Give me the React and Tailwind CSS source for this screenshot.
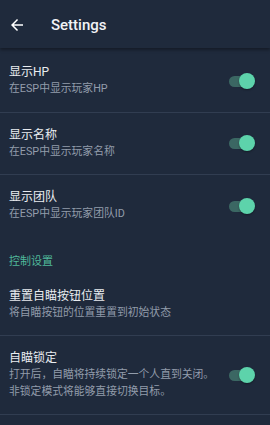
import React from 'react';

const FONT = { fontFamily: 'Roboto, "Noto Sans CJK SC", sans-serif' };

const Toggle = () => (
    <div className="relative w-[26px] h-[16px] shrink-0">
        <div className="absolute left-0 top-[3px] w-[24px] h-[11px] rounded-full bg-[#3b6763]" />
        <div className="absolute right-0 top-0 w-[16px] h-[16px] rounded-full bg-[#5dd3ab] shadow-[0_1px_2px_rgba(0,0,0,0.35)]" />
    </div>
);

const Item = ({ title, lines, toggle, divider = true }) => (
    <>
        <div className="flex items-center justify-between pl-[9px] pr-[15px] py-[14px]">
            <div className="flex flex-col">
                <div className="text-[12px] leading-[17px] text-[#e9ecf0]">{title}</div>
                {lines.map((l) => (
                    <div key={l} className="text-[10.8px] leading-[16.5px] text-[#929cab]">{l}</div>
                ))}
            </div>
            {toggle && <Toggle />}
        </div>
        {divider && <div className="h-px bg-[#313d51]" />}
    </>
);

export default function App() {
    return (
        <div className="w-[270px] h-[425px] overflow-hidden bg-[#1f2a3c]" style={FONT}>
            <div className="relative z-10 h-[48px] flex items-center bg-[#1f2a3c] shadow-[0_2px_3px_rgba(0,0,0,0.35)]">
                <svg width="18" height="18" viewBox="0 0 24 24" className="ml-[8px] mt-[2px]" fill="#ffffff">
                    <path d="M20 11H7.83l5.59-5.59L12 4l-8 8 8 8 1.41-1.41L7.83 13H20v-2z" />
                </svg>
                <span className="ml-[25px] mt-[2px] text-[15px] font-medium text-[#f1f3f6]">Settings</span>
            </div>

            <div className="pt-[2px]">
                <Item title="显示HP" lines={['在ESP中显示玩家HP']} toggle />
                <Item title="显示名称" lines={['在ESP中显示玩家名称']} toggle />
                <Item title="显示团队" lines={['在ESP中显示玩家团队ID']} toggle divider={false} />

                <div className="pl-[9px] pt-[17px] pb-[4px] text-[11px] leading-[16px] text-[#4fb89a]">控制设置</div>

                <Item title="重置自瞄按钮位置" lines={['将自瞄按钮的位置重置到初始状态']} />
                <Item
                    title="自瞄锁定"
                    lines={['打开后，自瞄将持续锁定一个人直到关闭。', '非锁定模式将能够直接切换目标。']}
                    toggle
                />
            </div>
        </div>
    );
}
